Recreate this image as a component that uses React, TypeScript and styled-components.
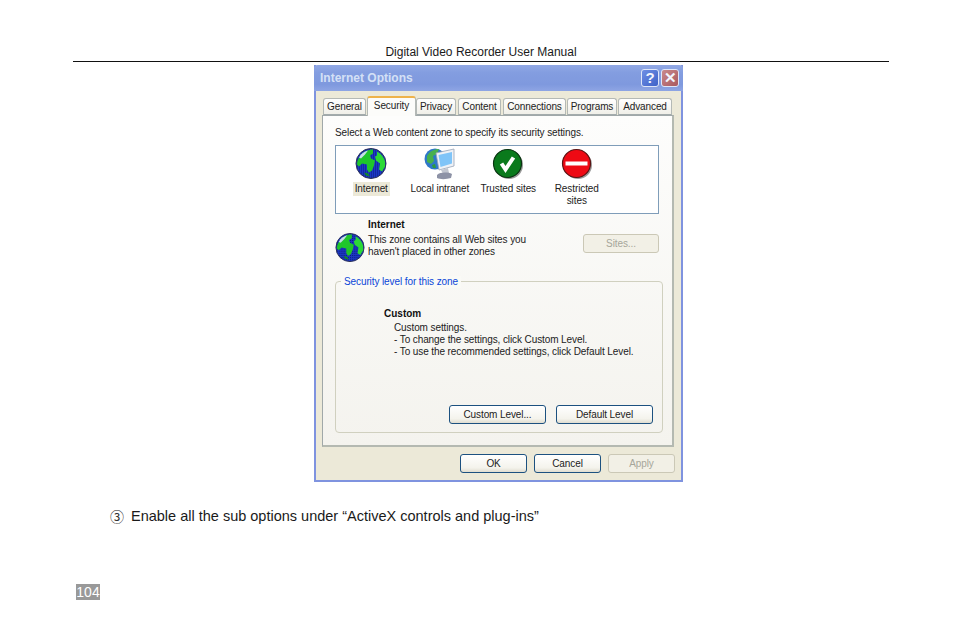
import React from "react";
import styled, { createGlobalStyle } from "styled-components";

const GlobalStyle = createGlobalStyle`
  html, body {
    margin: 0;
    padding: 0;
    background: #fff;
  }
`;

const Page = styled.div`
  width: 954px;
  height: 637px;
  position: relative;
  overflow: hidden;
  padding: 45px 65px 0 73px;
  box-sizing: border-box;
  display: flex;
  flex-direction: column;
  font-family: "Liberation Sans", Arial, sans-serif;
  color: #1a1a1a;
`;

const Header = styled.div`
  height: 16px;
  line-height: 14px;
  font-size: 12px;
  text-align: center;
  border-bottom: 1px solid #111;
`;

const Dialog = styled.div`
  width: 369px;
  height: 417px;
  margin: 3px 0 0 241px;
  box-sizing: border-box;
  background: #ece9d8;
  border: 2px solid #7f93df;
  border-top: 0;
  display: flex;
  flex-direction: column;
  font-size: 10px;
  letter-spacing: -0.1px;
  line-height: 12px;
  color: #222;
`;

const TitleBar = styled.div`
  height: 26px;
  flex: none;
  margin: 0 -2px;
  padding: 0 4px 0 6px;
  display: flex;
  align-items: center;
  gap: 2px;
  background: linear-gradient(#91a8e4 0%, #839de0 30%, #7f99de 75%, #8ea5e4 100%);
  border-radius: 4px 4px 0 0;
`;

const Title = styled.div`
  flex: 1;
  color: #d4e0f6;
  font-size: 12px;
  letter-spacing: 0;
  font-weight: 700;
`;

const CaptionButton = styled.div<{ $close?: boolean }>`
  width: 18px;
  height: 18px;
  box-sizing: border-box;
  border: 1px solid #dfe6f8;
  border-radius: 3px;
  display: flex;
  align-items: center;
  justify-content: center;
  color: #f2f5fc;
  font-size: 15px;
  font-weight: 700;
  background: ${(p) =>
    p.$close
      ? "linear-gradient(135deg, #c98a8c, #a9585f)"
      : "linear-gradient(135deg, #6f8fe4, #3f62c8)"};
`;

const Body = styled.div`
  flex: 1;
  padding: 5px 7px 0 6px;
  display: flex;
  flex-direction: column;
`;

const TabStrip = styled.div`
  height: 19px;
  padding-left: 1px;
  display: flex;
  align-items: flex-end;
  position: relative;
  z-index: 1;
`;

const Tab = styled.div<{ $w: number; $gap: number; $active?: boolean }>`
  width: ${(p) => p.$w}px;
  margin-left: ${(p) => p.$gap}px;
  height: ${(p) => (p.$active ? 20 : 17)}px;
  margin-bottom: ${(p) => (p.$active ? -1 : 0)}px;
  box-sizing: border-box;
  text-align: center;
  line-height: 15px;
  white-space: nowrap;
  padding-bottom: ${(p) => (p.$active ? 3 : 0)}px;
  border: 1px solid #b4b9b6;
  border-bottom: ${(p) => (p.$active ? "0" : "1px solid #a3abac")};
  border-top: ${(p) => (p.$active ? "2px solid #eeb34a" : "1px solid #b4b9b6")};
  border-radius: 3px 3px 0 0;
  background: ${(p) =>
    p.$active ? "#fcfcfa" : "linear-gradient(#ffffff, #f0efe8)"};
`;

const Panel = styled.div`
  width: 352px;
  height: 332px;
  box-sizing: border-box;
  padding: 11px 12px 0 12px;
  border: 1px solid #a0a8a9;
  border-right: 2px solid #b4b9b1;
  border-bottom: 2px solid #b4b9b1;
  background: linear-gradient(#fdfdfc, #f4f3ee);
`;

const Prompt = styled.div`
  height: 17px;
  margin-bottom: 1px;
`;

const ZoneList = styled.div`
  width: 324px;
  height: 69px;
  box-sizing: border-box;
  border: 1px solid #7f9db9;
  background: #fff;
  padding: 2px 0 0 1px;
  display: flex;
  align-items: flex-start;
`;

const Zone = styled.div`
  width: 68.5px;
  display: flex;
  flex-direction: column;
  align-items: center;
  text-align: center;
`;

const ZoneIcon = styled.div`
  width: 32px;
  height: 32px;
  margin-bottom: 3px;
`;

const ZoneLabel = styled.div<{ $selected?: boolean; $wrap?: boolean }>`
  padding: 0 2px;
  width: ${(p) => (p.$wrap ? "56px" : "auto")};
  background: ${(p) => (p.$selected ? "#ece9d8" : "transparent")};
  height: ${(p) => (p.$selected ? "14px" : "auto")};
  line-height: ${(p) => (p.$selected ? "14px" : "12px")};
  margin-top: ${(p) => (p.$selected ? "-1px" : "0")};
`;

const InfoRow = styled.div`
  height: 67px;
  display: flex;
  align-items: flex-start;
`;

const InfoGlobe = styled.div`
  width: 30px;
  height: 30px;
  margin-top: 19px;
  flex: none;
`;

const InfoText = styled.div`
  width: 215px;
  padding: 5px 0 0 3px;
`;

const BoldLine = styled.div<{ $mb: number }>`
  font-weight: 700;
  letter-spacing: 0;
  color: #111;
  margin-bottom: ${(p) => p.$mb}px;
`;

const SitesSlot = styled.div`
  padding-top: 20px;
`;

const XpButton = styled.button<{ $w: number; $off?: boolean }>`
  width: ${(p) => p.$w}px;
  height: 19px;
  padding: 0;
  font: inherit;
  letter-spacing: inherit;
  color: ${(p) => (p.$off ? "#a6a69a" : "#222")};
  border-radius: 3px;
  border: 1px solid ${(p) => (p.$off ? "#cbc8b6" : "#1c5180")};
  background: ${(p) =>
    p.$off ? "#f2f0e6" : "linear-gradient(#ffffff, #f4f3ec 75%, #e0ddd0)"};
`;

const Group = styled.div`
  width: 328px;
  height: 152px;
  box-sizing: border-box;
  position: relative;
  padding: 26px 9px 0 48px;
  border: 1px solid #d0d0bf;
  border-radius: 4px;
  display: flex;
  flex-direction: column;
`;

const Legend = styled.div`
  position: absolute;
  top: -6px;
  left: 5px;
  padding: 0 3px;
  background: #fafaf6;
  color: #0a46d8;
`;

const GroupText = styled.div`
  flex: 1;
  padding-left: 10px;
`;

const GroupButtons = styled.div`
  display: flex;
  justify-content: flex-end;
  gap: 10px;
  padding-bottom: 8px;
`;

const DialogButtons = styled.div`
  display: flex;
  justify-content: flex-end;
  gap: 7px;
  padding: 7px 0 0;
  margin-right: -1px;
`;

const Instruction = styled.div`
  margin: 25px 0 0 37px;
  display: flex;
  align-items: center;
  gap: 7px;
  font-size: 14.5px;
  line-height: 18px;
  white-space: nowrap;
`;

const Bullet = styled.span`
  width: 14px;
  font-family: "Noto Sans CJK SC", sans-serif;
  font-size: 14px;
  color: #333;
`;

const PageNumber = styled.div`
  position: absolute;
  left: 76px;
  top: 584px;
  width: 24px;
  height: 16px;
  line-height: 16px;
  background: #999;
  color: #fff;
  font-size: 14px;
  text-align: center;
`;

const Globe: React.FC<{ id: string }> = ({ id }) => (
  <svg viewBox="0 0.5 32 32" width="100%" height="100%">
    <defs>
      <pattern id={id} width="2" height="2" patternUnits="userSpaceOnUse">
        <rect width="2" height="2" fill="#1c38c4" />
        <rect width="1" height="1" fill="#0a1a80" />
      </pattern>
    </defs>
    <circle cx="16" cy="16" r="15" fill={`url(#${id})`} stroke="#2a2f55" strokeWidth="1" />
    <path d="M5 9 C8 4 13 2 18 2 L18 6 L15 8 L16 11 L20 13 L19 18 L17 23 L14 25 L12 22 L12 17 L7 16 L4 19 L2 17 C2 14 3 11 5 9Z" fill="#1fc62a" />
    <path d="M22 4 C26 6 29 10 30 14 L30 19 L27 24 L24 22 L25 16 L21 13 L20 9 L22 8Z" fill="#2bd936" />
    <path d="M9 25 L13 26 L15 29 L11 28Z" fill="#128a24" />
    <path d="M4 10 C6 6 9 4 13 3 L10 7 L6 11Z" fill="#c8dce8" />
  </svg>
);

const IntranetIcon: React.FC = () => (
  <svg viewBox="0 0 32 32" width="100%" height="100%">
    <circle cx="11" cy="11" r="10.5" fill="#2f78c8" />
    <path d="M3 8 C6 3 10 1 15 1 L13 6 L9 8 L10 13 L7 16 L3 14Z" fill="#47b04e" />
    <path d="M8 17 L11 16 L12 20 L9 20Z" fill="#2f9c3c" />
    <path d="M12 5 L30 1 L30 18 L15 22Z" fill="#eef1f6" stroke="#97a3b6" strokeWidth="0.8" />
    <path d="M14.5 7 L28 4 L28 15.5 L16.5 19Z" fill="#7fc4f8" />
    <path d="M17 22 L24 20 L25 25 L19 26Z" fill="#c2c6d0" />
    <path d="M13 27 C16 24 24 24 28 26 L27 30 C22 31.5 16 31.5 13 30Z" fill="#8d92a6" />
  </svg>
);

const TrustedIcon: React.FC = () => (
  <svg viewBox="0 0 32 32" width="100%" height="100%">
    <circle cx="17" cy="17" r="14" fill="#9a9a9a" />
    <circle cx="15.5" cy="15.5" r="14" fill="#0a7a1c" stroke="#0b3412" strokeWidth="1.2" />
    <path d="M9.5 15.5 L13.5 21.5 L21.5 9.5" fill="none" stroke="#fff" strokeWidth="4" />
  </svg>
);

const RestrictedIcon: React.FC = () => (
  <svg viewBox="0 0 32 32" width="100%" height="100%">
    <circle cx="17" cy="17" r="14" fill="#9a9a9a" />
    <circle cx="15.5" cy="15.5" r="14" fill="#ee0a14" stroke="#5a1414" strokeWidth="1.2" />
    <rect x="4.5" y="13.5" width="22" height="4" fill="#fff" />
  </svg>
);

const tabs = [
  { label: "General", w: 43, gap: 0 },
  { label: "Security", w: 49, gap: 1, active: true },
  { label: "Privacy", w: 40, gap: 0 },
  { label: "Content", w: 43, gap: 2 },
  { label: "Connections", w: 63, gap: 2 },
  { label: "Programs", w: 50, gap: 1 },
  { label: "Advanced", w: 54, gap: 1 },
];

const App: React.FC = () => {
  return (
    <Page>
      <GlobalStyle />
      <Header>Digital Video Recorder User Manual</Header>
      <Dialog>
        <TitleBar>
          <Title>Internet Options</Title>
          <CaptionButton>?</CaptionButton>
          <CaptionButton $close>✕</CaptionButton>
        </TitleBar>
        <Body>
          <TabStrip>
            {tabs.map((t) => (
              <Tab key={t.label} $w={t.w} $gap={t.gap} $active={t.active}>
                {t.label}
              </Tab>
            ))}
          </TabStrip>
          <Panel>
            <Prompt>Select a Web content zone to specify its security settings.</Prompt>
            <ZoneList>
              <Zone>
                <ZoneIcon>
                  <Globe id="dither-a" />
                </ZoneIcon>
                <ZoneLabel $selected>Internet</ZoneLabel>
              </Zone>
              <Zone>
                <ZoneIcon>
                  <IntranetIcon />
                </ZoneIcon>
                <ZoneLabel>Local intranet</ZoneLabel>
              </Zone>
              <Zone>
                <ZoneIcon>
                  <TrustedIcon />
                </ZoneIcon>
                <ZoneLabel>Trusted sites</ZoneLabel>
              </Zone>
              <Zone>
                <ZoneIcon>
                  <RestrictedIcon />
                </ZoneIcon>
                <ZoneLabel $wrap>Restricted sites</ZoneLabel>
              </Zone>
            </ZoneList>
            <InfoRow>
              <InfoGlobe>
                <Globe id="dither-b" />
              </InfoGlobe>
              <InfoText>
                <BoldLine $mb={3}>Internet</BoldLine>
                This zone contains all Web sites you
                <br />
                haven't placed in other zones
              </InfoText>
              <SitesSlot>
                <XpButton $w={76} $off>
                  Sites...
                </XpButton>
              </SitesSlot>
            </InfoRow>
            <Group>
              <Legend>Security level for this zone</Legend>
              <BoldLine $mb={2}>Custom</BoldLine>
              <GroupText>
                Custom settings.
                <br />- To change the settings, click Custom Level.
                <br />- To use the recommended settings, click Default Level.
              </GroupText>
              <GroupButtons>
                <XpButton $w={97}>Custom Level...</XpButton>
                <XpButton $w={97}>Default Level</XpButton>
              </GroupButtons>
            </Group>
          </Panel>
          <DialogButtons>
            <XpButton $w={67}>OK</XpButton>
            <XpButton $w={67}>Cancel</XpButton>
            <XpButton $w={67} $off>
              Apply
            </XpButton>
          </DialogButtons>
        </Body>
      </Dialog>
      <Instruction>
        <Bullet>③</Bullet>
        Enable all the sub options under “ActiveX controls and plug-ins”
      </Instruction>
      <PageNumber>104</PageNumber>
    </Page>
  );
};

export default App;
